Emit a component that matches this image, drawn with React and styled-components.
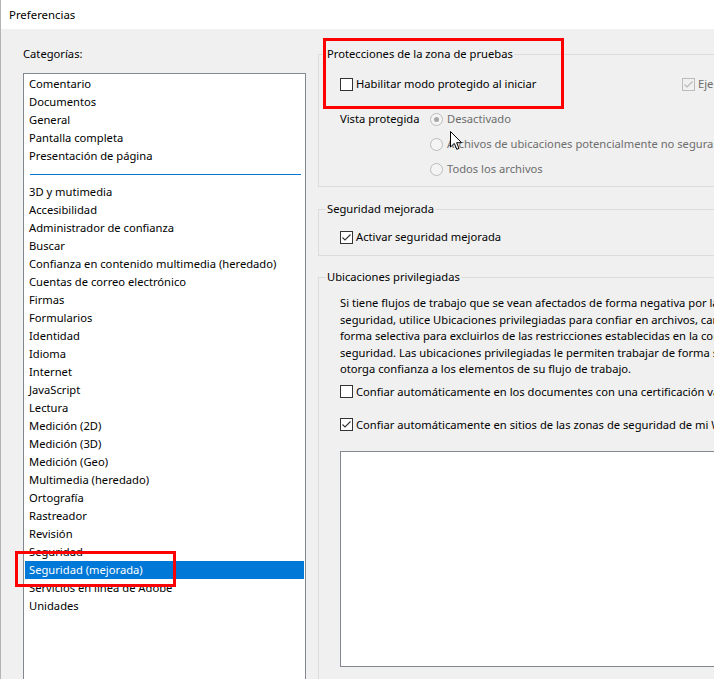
import React from "react";
import styled, { createGlobalStyle } from "styled-components";

const Global = createGlobalStyle`
  html, body { margin: 0; padding: 0; background: #f0f0f0; overflow: hidden; }
  body { font-family: "Noto Sans", "Open Sans", sans-serif; font-size: 11.2px; color: #000; }
  * { box-sizing: border-box; }
`;

const Window = styled.div`
  position: relative;
  width: 714px;
  height: 679px;
  overflow: hidden;
  display: flex;
  flex-direction: column;
  background: #f0f0f0;
  border-left: 1px solid #b4b4b4;
`;

const TitleBar = styled.div`
  height: 29px;
  flex: none;
  background: #fff;
  display: flex;
  align-items: center;
  padding-left: 8px;
  font-size: 11.4px;
  box-shadow: -1px 0 0 #6e4a3c;
`;

const Main = styled.div`
  flex: 1;
  min-height: 0;
  display: flex;
`;

const LeftCol = styled.div`
  width: 305px;
  flex: none;
  padding-left: 22px;
  display: flex;
  flex-direction: column;
`;

const CatLabel = styled.div`
  margin-top: 17px;
  line-height: 16px;
  height: 16px;
`;

const ListBox = styled.div`
  margin-top: 11px;
  flex: 1;
  width: 283px;
  background: #fff;
  border: 1px solid #828790;
  border-bottom: none;
  padding: 1px 1px 0 1px;
`;

const Item = styled.div`
  height: 18px;
  line-height: 18px;
  padding-left: 4px;
  white-space: nowrap;
  background: ${(p) => (p.$selected ? "#0078d7" : "transparent")};
  color: ${(p) => (p.$selected ? "#fff" : "#000")};
`;

const Separator = styled.div`
  height: 18px;
  display: flex;
  align-items: center;
  padding: 0 3px 0 5px;
  &::after {
    content: "";
    display: block;
    flex: 1;
    height: 1px;
    background: #0078d7;
  }
`;

const RightCol = styled.div`
  flex: 1;
  min-width: 0;
  margin-left: 12px;
  display: flex;
  flex-direction: column;
`;

const Group = styled.fieldset`
  margin: ${(p) => p.$top}px 0 0 0;
  padding: 0;
  width: 440px;
  flex: none;
  border: 1px solid #dcdcdc;
  min-width: 0;
`;

const Legend = styled.legend`
  margin-left: 7px;
  padding: 0 1px;
  line-height: 16px;
  height: 16px;
`;

const GroupBody = styled.div`
  padding: ${(p) => p.$pt}px 0 ${(p) => p.$pb}px 21px;
  display: flex;
  flex-direction: column;
`;

const CheckRow = styled.div`
  display: flex;
  align-items: center;
  height: 16px;
  line-height: 16px;
  white-space: nowrap;
  margin-top: ${(p) => p.$mt || 0}px;
  color: ${(p) => (p.$disabled ? "#6d6d6d" : "#000")};
`;

const TopRow = styled.div`
  display: grid;
  grid-template-columns: 342px auto;
`;

const Box = styled.span`
  width: 13px;
  height: 13px;
  flex: none;
  border: 1px solid ${(p) => (p.$disabled ? "#bcbcbc" : "#333")};
  background: ${(p) => (p.$disabled ? "#f0f0f0" : "#fff")};
  margin-right: 3px;
  display: inline-flex;
  align-items: center;
  justify-content: center;
`;

const ViewGrid = styled.div`
  margin-top: 19px;
  display: grid;
  grid-template-columns: 90px auto;
`;

const ViewLabel = styled.div`
  line-height: 16px;
  height: 16px;
`;

const RadioCol = styled.div`
  display: flex;
  flex-direction: column;
  gap: 9px;
`;

const Circle = styled.span`
  width: 13px;
  height: 13px;
  flex: none;
  border-radius: 50%;
  border: 1px solid #bcbcbc;
  background: #f4f4f4;
  margin-right: 4px;
  display: inline-flex;
  align-items: center;
  justify-content: center;
  &::after {
    content: "";
    width: 5px;
    height: 5px;
    border-radius: 50%;
    background: ${(p) => (p.$on ? "#a8a8a8" : "transparent")};
  }
`;

const Para = styled.div`
  line-height: 16.5px;
  white-space: nowrap;
`;

const WhiteBox = styled.div`
  margin-top: 18px;
  height: 216px;
  width: 420px;
  background: #fff;
  border: 1px solid #828790;
`;

const Highlight = styled.div`
  position: absolute;
  left: ${(p) => p.$x}px;
  top: ${(p) => p.$y}px;
  width: ${(p) => p.$w}px;
  height: ${(p) => p.$h}px;
  border: 3px solid #ff0000;
  pointer-events: none;
`;

const Cursor = styled.svg`
  position: absolute;
  left: 449px;
  top: 131px;
  pointer-events: none;
`;

function Check({ checked, disabled }) {
  return (
    <Box $disabled={disabled}>
      {checked && (
        <svg width="11" height="11" viewBox="0 0 11 11">
          <path
            d="M1.5 5.5 L4 8 L9.5 2.5"
            fill="none"
            stroke={disabled ? "#b8b8b8" : "#333"}
            strokeWidth="1.1"
          />
        </svg>
      )}
    </Box>
  );
}

const top = [
  "Comentario",
  "Documentos",
  "General",
  "Pantalla completa",
  "Presentación de página",
];
const rest = [
  "3D y mutimedia",
  "Accesibilidad",
  "Administrador de confianza",
  "Buscar",
  "Confianza en contenido multimedia (heredado)",
  "Cuentas de correo electrónico",
  "Firmas",
  "Formularios",
  "Identidad",
  "Idioma",
  "Internet",
  "JavaScript",
  "Lectura",
  "Medición (2D)",
  "Medición (3D)",
  "Medición (Geo)",
  "Multimedia (heredado)",
  "Ortografía",
  "Rastreador",
  "Revisión",
  "Seguridad",
  "Seguridad (mejorada)",
  "Servicios en línea de Adobe",
  "Unidades",
];

export default function App() {
  return (
    <>
      <Global />
      <Window>
        <TitleBar>Preferencias</TitleBar>
        <Main>
          <LeftCol>
            <CatLabel>Categorías:</CatLabel>
            <ListBox>
              {top.map((t) => (
                <Item key={t}>{t}</Item>
              ))}
              <Separator />
              {rest.map((t) => (
                <Item key={t} $selected={t === "Seguridad (mejorada)"}>
                  {t}
                </Item>
              ))}
            </ListBox>
          </LeftCol>
          <RightCol>
            <Group $top={17}>
              <Legend>Protecciones de la zona de pruebas</Legend>
              <GroupBody $pt={14} $pb={9}>
                <TopRow>
                  <CheckRow>
                    <Check />
                    Habilitar modo protegido al iniciar
                  </CheckRow>
                  <CheckRow $disabled>
                    <Check checked disabled />
                    Ejecutar en AppContainer
                  </CheckRow>
                </TopRow>
                <ViewGrid>
                  <ViewLabel>Vista protegida</ViewLabel>
                  <RadioCol>
                    <CheckRow $disabled>
                      <Circle $on />
                      Desactivado
                    </CheckRow>
                    <CheckRow $disabled>
                      <Circle />
                      Archivos de ubicaciones potencialmente no seguras
                    </CheckRow>
                    <CheckRow $disabled>
                      <Circle />
                      Todos los archivos
                    </CheckRow>
                  </RadioCol>
                </ViewGrid>
              </GroupBody>
            </Group>
            <Group $top={14}>
              <Legend>Seguridad mejorada</Legend>
              <GroupBody $pt={12} $pb={10}>
                <CheckRow>
                  <Check checked />
                  Activar seguridad mejorada
                </CheckRow>
              </GroupBody>
            </Group>
            <Group $top={13}>
              <Legend>Ubicaciones privilegiadas</Legend>
              <GroupBody $pt={10} $pb={20}>
                <Para>
                  Si tiene flujos de trabajo que se vean afectados de forma negativa por la configuración de
                  <br />
                  seguridad, utilice Ubicaciones privilegiadas para confiar en archivos, carpetas y hosts de
                  <br />
                  forma selectiva para excluirlos de las restricciones establecidas en la configuración de
                  <br />
                  seguridad. Las ubicaciones privilegiadas le permiten trabajar de forma segura al tiempo que
                  <br />
                  otorga confianza a los elementos de su flujo de trabajo.
                </Para>
                <CheckRow $mt={6}>
                  <Check />
                  Confiar automáticamente en los documentes con una certificación válida
                </CheckRow>
                <CheckRow $mt={17}>
                  <Check checked />
                  Confiar automáticamente en sitios de las zonas de seguridad de mi Win OS
                </CheckRow>
                <WhiteBox />
              </GroupBody>
            </Group>
          </RightCol>
        </Main>
        <Highlight $x={322} $y={38} $w={241} $h={71} />
        <Highlight $x={14} $y={551} $w={161} $h={36} />
        <Cursor width="13" height="20" viewBox="0 0 13 20">
          <path
            d="M0.5 0.5 L0.5 16 L4.3 12.4 L6.8 18.3 L9 17.4 L6.6 11.7 L11.6 11.7 Z"
            fill="#fff"
            stroke="#000"
            strokeWidth="1"
            strokeLinejoin="round"
          />
        </Cursor>
      </Window>
    </>
  );
}
